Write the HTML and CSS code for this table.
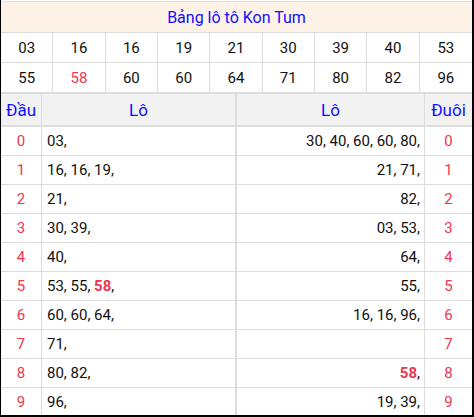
FILE: index.html
```html
<!DOCTYPE html>
<html lang="vi">
<head>
<meta charset="utf-8">
<title>Bảng lô tô Kon Tum</title>
<link rel="stylesheet" href="styles.css">
</head>
<body>
<div class="frame">
  <table class="nums">
    <tr><th class="title" colspan="9">Bảng lô tô Kon Tum</th></tr>
    <tr><td>03</td><td>16</td><td>16</td><td>19</td><td>21</td><td>30</td><td>39</td><td>40</td><td>53</td></tr>
    <tr><td>55</td><td class="red">58</td><td>60</td><td>60</td><td>64</td><td>71</td><td>80</td><td>82</td><td>96</td></tr>
  </table>
  <table class="lo">
    <colgroup><col class="c-dau"><col class="c-left"><col class="c-right"><col class="c-duoi"></colgroup>
    <tr class="head"><th>Đầu</th><th class="sep">Lô</th><th>Lô</th><th>Đuôi</th></tr>
    <tr><td class="d">0</td><td class="l sep">03,</td><td class="r">30, 40, 60, 60, 80,</td><td class="d">0</td></tr>
    <tr><td class="d">1</td><td class="l sep">16, 16, 19,</td><td class="r">21, 71,</td><td class="d">1</td></tr>
    <tr><td class="d">2</td><td class="l sep">21,</td><td class="r">82,</td><td class="d">2</td></tr>
    <tr><td class="d">3</td><td class="l sep">30, 39,</td><td class="r">03, 53,</td><td class="d">3</td></tr>
    <tr><td class="d">4</td><td class="l sep">40,</td><td class="r">64,</td><td class="d">4</td></tr>
    <tr><td class="d">5</td><td class="l sep">53, 55, <b class="hot">58</b>,</td><td class="r">55,</td><td class="d">5</td></tr>
    <tr><td class="d">6</td><td class="l sep">60, 60, 64,</td><td class="r">16, 16, 96,</td><td class="d">6</td></tr>
    <tr><td class="d">7</td><td class="l sep">71,</td><td class="r"></td><td class="d">7</td></tr>
    <tr><td class="d">8</td><td class="l sep">80, 82,</td><td class="r"><b class="hot">58</b>,</td><td class="d">8</td></tr>
    <tr><td class="d">9</td><td class="l sep">96,</td><td class="r">19, 39,</td><td class="d">9</td></tr>
  </table>
</div>
</body>
</html>
```
FILE: styles.css
```css
html, body {
  margin: 0;
  padding: 0;
  background: #fff;
}
body {
  font-family: Roboto, "Liberation Sans", Arial, sans-serif;
  color: #111;
}
.frame {
  width: 474px;
  height: 417px;
  box-sizing: border-box;
  border-left: 1px solid #000;
  border-right: 2px solid #000;
  border-bottom: 2px solid #000;
  padding-top: 1px;
  overflow: hidden;
}
table {
  width: 100%;
  border-collapse: separate;
  border-spacing: 0;
  table-layout: fixed;
}
th, td {
  padding: 0;
  box-sizing: border-box;
}
.nums {
  border-top: 1px solid #ddd;
}
.nums .title {
  height: 31px;
  background: #fff2e6;
  color: #1010ff;
  font-weight: normal;
  font-size: 16px;
  border-bottom: 1px solid #ddd;
  text-align: center;
}
.nums td {
  height: 30px;
  font-size: 15px;
  text-align: center;
  border-bottom: 1px solid #ddd;
  border-right: 1px solid #ddd;
}
.nums td:last-child { border-right: none; }
.nums tr:last-child td { border-bottom: 2px solid #ddd; height: 31px; }
.red { color: #ee3650; }
.lo .c-dau { width: 41px; }
.lo .c-left { width: 195px; }
.lo .c-right { width: 188px; }
.lo .c-duoi { width: 47px; }
.lo th {
  height: 33px;
  background: #f2f2f2;
  color: #1010ff;
  font-weight: normal;
  font-size: 17px;
  border-bottom: 2px solid #ddd;
  border-right: 1px solid #ddd;
  text-align: center;
}
.lo td {
  height: 29px;
  font-size: 15px;
  border-bottom: 1px solid #ddd;
  border-right: 1px solid #ddd;
}
.lo tr > :last-child { border-right: none; }
.lo .sep { border-right: 2px solid #ddd; }
.lo .d { text-align: center; color: #ee3650; }
.lo .l { text-align: left; padding-left: 5px; }
.lo .r { text-align: right; padding-right: 4px; }
.hot { color: #ee3650; font-weight: bold; }
```
